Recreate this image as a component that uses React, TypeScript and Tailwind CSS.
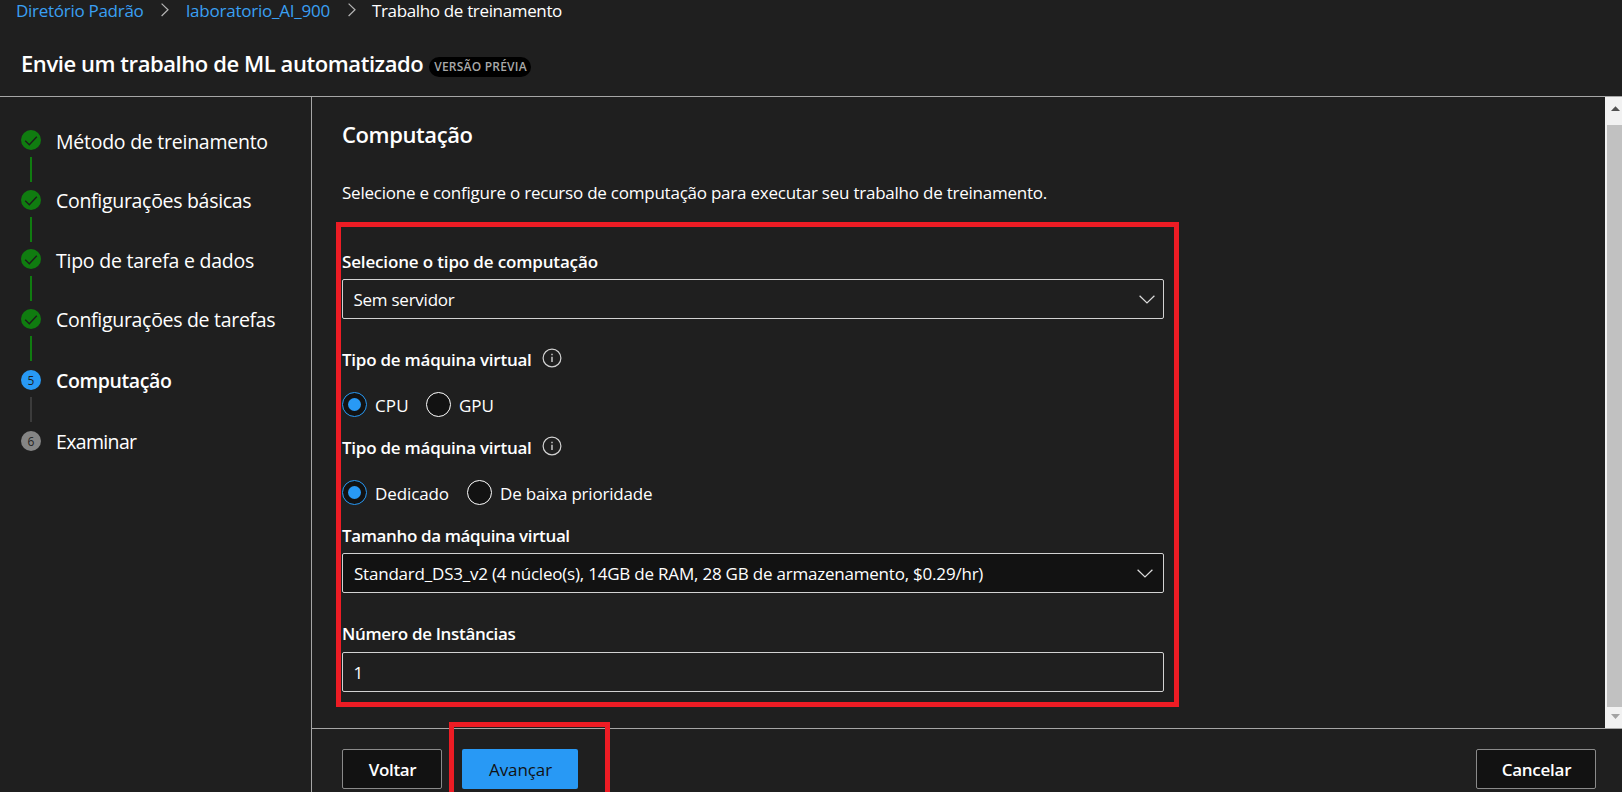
import type { ReactNode } from "react";

type Status = "done" | "current" | "pending";

const steps: { label: string; status: Status; height: string; text: string }[] = [
  { label: "Método de treinamento", status: "done", height: "h-[60px]", text: "-mt-0.5 tracking-[-0.25px]" },
  { label: "Configurações básicas", status: "done", height: "h-[59px]", text: "-mt-[3px] tracking-[-0.3px]" },
  { label: "Tipo de tarefa e dados", status: "done", height: "h-[60px]", text: "-mt-0.5 tracking-[-0.24px]" },
  { label: "Configurações de tarefas", status: "done", height: "h-[61px]", text: "-mt-[3px] tracking-[-0.3px]" },
  { label: "Computação", status: "current", height: "h-[61px]", text: "-mt-[3px] font-semibold tracking-[-0.38px]" },
  { label: "Examinar", status: "pending", height: "h-5", text: "-mt-[3px] tracking-[-0.65px]" },
];

function StepMarker({ status, index }: { status: Status; index: number }) {
  if (status === "done") {
    return (
      <svg width="20" height="20" viewBox="0 0 20 20" className="shrink-0">
        <circle cx="10" cy="10" r="10" fill="#107c10" />
        <path d="M4.2 10.8 8.3 14.7 15.8 6.8" fill="none" stroke="#1b1f1b" strokeWidth="1.4" />
      </svg>
    );
  }
  return (
    <div
      className={
        "flex size-5 shrink-0 items-center justify-center rounded-full pt-px text-xs leading-5 text-[#1f1f1f] " +
        (status === "current" ? "bg-[#2899f5]" : "bg-[#858585]")
      }
    >
      {index}
    </div>
  );
}

function Sidebar() {
  return (
    <nav className="w-[312px] shrink-0 border-r border-[#a6a6a6] pt-[33px] pl-[21px]">
      {steps.map((s, i) => (
        <div key={s.label} className={"flex " + s.height}>
          <div className="flex w-5 flex-col items-center">
            <StepMarker status={s.status} index={i + 1} />
            {i < steps.length - 1 && (
              <div className={"mt-[7px] h-[25px] w-0.5 " + (s.status === "done" ? "bg-[#107c10]" : "bg-[#3b3b3b]")} />
            )}
          </div>
          <div className={"ml-[15px] text-[19.5px] leading-7 whitespace-nowrap " + s.text}>{s.label}</div>
        </div>
      ))}
    </nav>
  );
}

function Crumb() {
  return (
    <svg width="8" height="14" viewBox="0 0 8 14" className="shrink-0" fill="none" stroke="#b4b4b4" strokeWidth="1.2">
      <path d="M.6.6 7 6.8.6 13" />
    </svg>
  );
}

function Info() {
  return (
    <svg width="20" height="20" viewBox="0 0 20 20" className="ml-2.5 -mt-1">
      <circle cx="10" cy="10" r="8.9" fill="none" stroke="#d2d2d2" strokeWidth="1.2" />
      <path d="M10 8.7V14M10 5.8V7.2" stroke="#d2d2d2" strokeWidth="1.4" />
    </svg>
  );
}

function Chevron() {
  return (
    <svg width="16" height="9" viewBox="0 0 16 9" fill="none" stroke="#dcdcdc" strokeWidth="1.2">
      <path d="M.6.7 8 8 15.4.7" />
    </svg>
  );
}

function Radio({ checked, children, className }: { checked?: boolean; children: ReactNode; className?: string }) {
  return (
    <label className="flex items-center">
      <span
        className={
          "flex size-[25px] items-center justify-center rounded-full border bg-[#121212] " +
          (checked ? "border-[#2899f5]" : "border-white")
        }
      >
        {checked && <span className="size-[13px] rounded-full bg-[#2899f5]" />}
      </span>
      <span className={"pt-0.5 leading-6 whitespace-nowrap " + className}>{children}</span>
    </label>
  );
}

function Footer() {
  return (
    <footer className="flex h-16 shrink-0 items-start border-t border-[#a6a6a6] pt-5 pr-[26px] pl-[30px]">
      <button className="flex h-10 w-[100px] items-center justify-center rounded-xs border border-[#8a8a8a] bg-[#121212] pt-0.5 pl-px font-semibold tracking-[-0.35px]">
        Voltar
      </button>
      <button className="ml-5 flex h-10 w-[116px] items-center justify-center rounded-xs bg-[#2899f5] pt-0.5 pl-px tracking-[-0.09px] text-[#121212]">
        Avançar
      </button>
      <button className="ml-auto flex h-10 w-[120px] items-center justify-center rounded-xs border border-[#8a8a8a] bg-[#121212] pt-0.5 pl-px font-semibold tracking-[-0.25px]">
        Cancelar
      </button>
    </footer>
  );
}

function Scrollbar() {
  return (
    <div className="flex w-[17px] shrink-0 flex-col bg-[#f1f1f1]">
      <svg width="17" height="28" viewBox="0 0 17 28">
        <path d="M6 14 10.5 9.3 15 14Z" fill="#505050" />
      </svg>
      <div className="ml-0.5 flex-1 bg-[#c1c1c1]" />
      <svg width="17" height="21" viewBox="0 0 17 21">
        <path d="M6 7 10.5 12 15 7Z" fill="#a3a3a3" />
      </svg>
    </div>
  );
}

export default function App() {
  return (
    <div className="relative flex h-[792px] w-[1622px] flex-col overflow-hidden bg-[#1f1f1f] font-['Open_Sans',sans-serif] text-[17px] leading-6 text-white">
      <header className="h-[97px] shrink-0 border-b border-[#a6a6a6]">
        <div className="-mt-px flex h-6 items-start pl-4 whitespace-nowrap">
          <span className="w-[145px] tracking-[-0.28px] text-[#3aa0f3]">Diretório Padrão</span>
          <div className="w-[25px] pt-1"><Crumb /></div>
          <span className="w-[162px] tracking-[-0.22px] text-[#3aa0f3]">laboratorio_AI_900</span>
          <div className="w-6 pt-1"><Crumb /></div>
          <span className="tracking-[-0.35px]">Trabalho de treinamento</span>
        </div>
        <div className="flex items-start pt-6 pl-[21px] whitespace-nowrap">
          <h1 className="w-[408px] text-[22px] leading-8 font-semibold tracking-[-0.43px]">
            Envie um trabalho de ML automatizado
          </h1>
          <span className="mt-2.5 flex h-5 w-[102px] items-center justify-center rounded-full bg-black pl-px text-xs font-semibold tracking-[0.22px] text-[#a8a8a8]">
            VERSÃO PRÉVIA
          </span>
        </div>
      </header>

      <div className="flex min-h-0 flex-1">
        <Sidebar />
        <div className="flex min-w-0 flex-1 flex-col">
          <div className="flex min-h-0 flex-1">
            <main className="min-w-0 flex-1 pt-[21px] pl-[30px] whitespace-nowrap">
              <h2 className="text-[22px] leading-8 font-semibold tracking-[-0.4px]">Computação</h2>
              <p className="mt-[31px] tracking-[-0.23px]">
                Selecione e configure o recurso de computação para executar seu trabalho de treinamento.
              </p>
              <div className="flex w-[822px] flex-col">
                <div className="mt-[45px] font-semibold tracking-[-0.15px]">Selecione o tipo de computação</div>
                <div className="mt-[5px] flex h-10 items-center justify-between rounded-xs border border-[#d2d2d2] pr-2 pl-[10.5px] tracking-[-0.25px]">
                  <span className="pt-0.5">Sem servidor</span>
                  <Chevron />
                </div>

                <div className="mt-[29px] flex h-6 items-center font-semibold tracking-[-0.24px]">
                  Tipo de máquina virtual
                  <Info />
                </div>
                <div className="mt-5 flex h-[25px]">
                  <Radio checked className="w-[59px] pl-2 tracking-[0.1px]">CPU</Radio>
                  <Radio className="pl-2 tracking-[0px]">GPU</Radio>
                </div>

                <div className="mt-[19px] flex h-6 items-center font-semibold tracking-[-0.24px]">
                  Tipo de máquina virtual
                  <Info />
                </div>
                <div className="mt-5 flex h-[25px]">
                  <Radio checked className="w-[100px] pl-2 tracking-[-0.1px]">Dedicado</Radio>
                  <Radio className="pl-2 tracking-[-0.2px]">De baixa prioridade</Radio>
                </div>

                <div className="mt-[19px] font-semibold tracking-[-0.37px]">Tamanho da máquina virtual</div>
                <div className="mt-[5px] flex h-10 items-center justify-between rounded-xs border border-[#d2d2d2] bg-[#121212] pr-2.5 pl-[11px] tracking-[-0.21px]">
                  <span className="pt-0.5">Standard_DS3_v2 (4 núcleo(s), 14GB de RAM, 28 GB de armazenamento, $0.29/hr)</span>
                  <Chevron />
                </div>

                <div className="mt-[29px] font-semibold tracking-[-0.33px]">Número de Instâncias</div>
                <div className="mt-1.5 flex h-10 items-center rounded-xs border border-[#d2d2d2] pt-0.5 pl-[10.5px]">1</div>
              </div>
            </main>
            <Scrollbar />
          </div>
          <Footer />
        </div>
      </div>

      <div className="pointer-events-none absolute top-[222px] left-[336px] h-[485px] w-[843px] border-[5px] border-[#ed1c24]" />
      <div className="pointer-events-none absolute top-[722px] left-[449px] h-[70px] w-[161px] border-[5px] border-b-0 border-[#ed1c24]" />
    </div>
  );
}
